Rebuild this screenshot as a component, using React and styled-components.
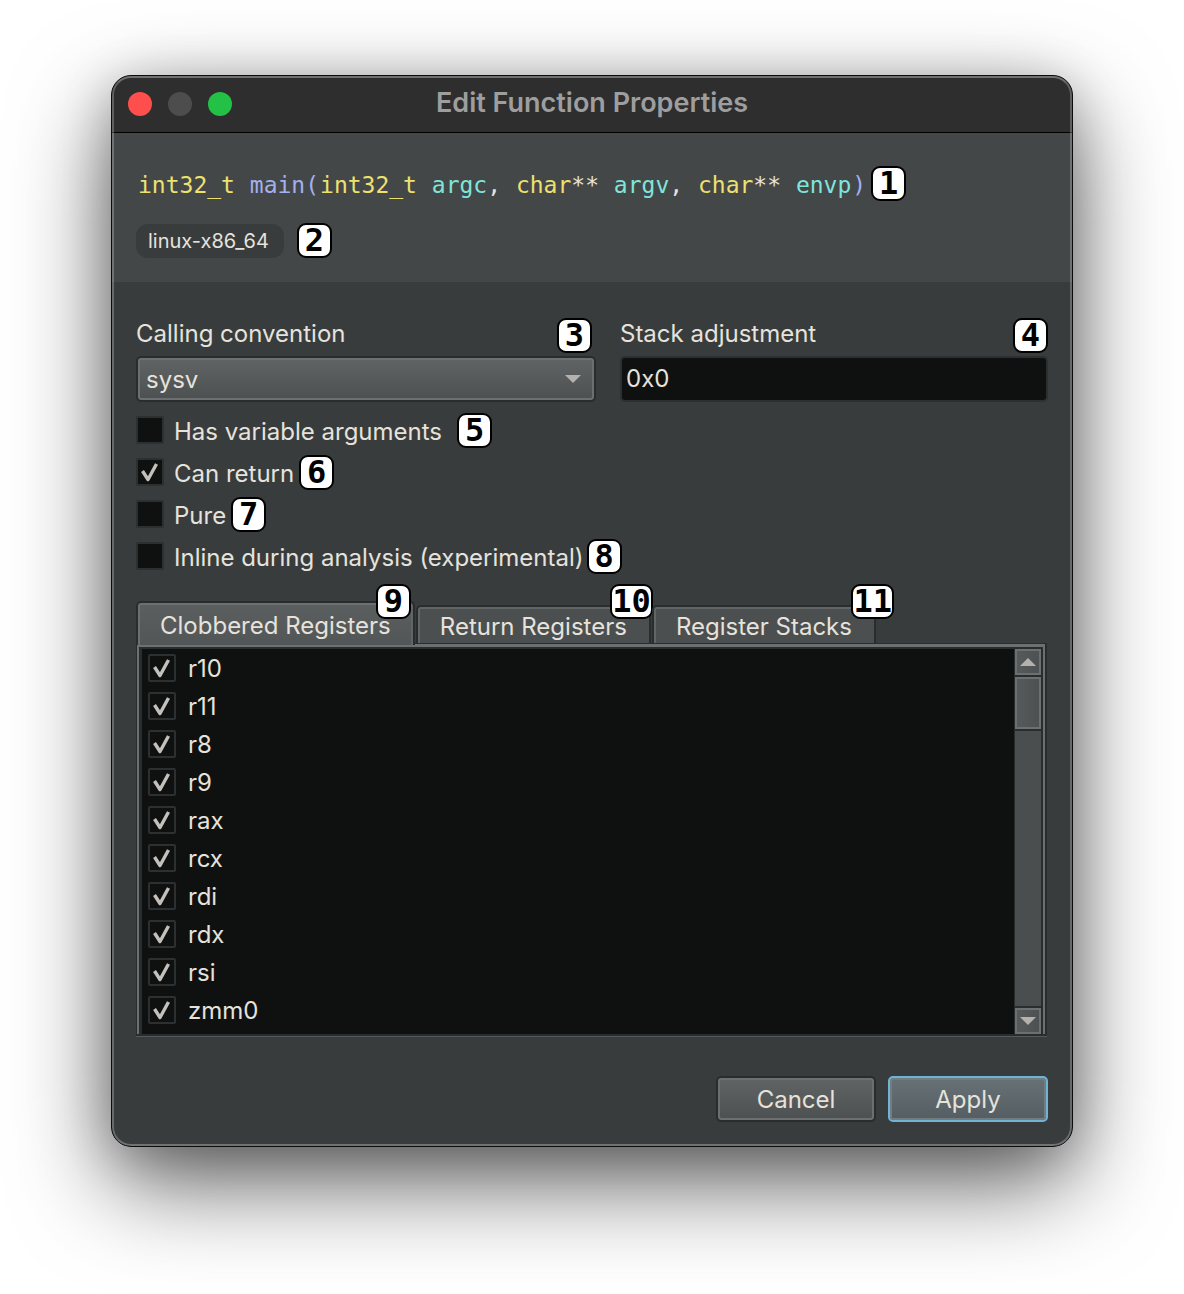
import React, { useState } from "react";
import styled, { createGlobalStyle, css } from "styled-components";

const ui = `Inter, "Liberation Sans", sans-serif`;
const mono = `"DejaVu Sans Mono", "Liberation Mono", monospace`;

const GlobalStyle = createGlobalStyle`
  *, *::before, *::after { box-sizing: border-box; }
  body { margin: 0; background: #fff; }
  button, input, select { font: inherit; color: inherit; margin: 0; }
`;

const Page = styled.main`
  min-height: 100vh;
  padding: 75px 111px;
  font: 400 24px/30px ${ui};
  color: #e6e2dc;
`;

const Window = styled.section`
  position: relative;
  border: 1px solid #0b0c0c;
  border-radius: 20px;
  overflow: hidden;
  background: #393c3d;

  &::after {
    content: "";
    position: absolute;
    inset: 0;
    border: 2px solid rgba(255, 255, 255, 0.24);
    border-bottom-color: rgba(255, 255, 255, 0.28);
    border-top-color: rgba(255, 255, 255, 0.32);
    border-radius: 19px;
    pointer-events: none;
  }
`;

const Shadow = styled.div`
  border-radius: 20px;
  box-shadow: 0 36px 96px rgba(0, 0, 0, 0.62), 0 8px 50px rgba(0, 0, 0, 0.2);
`;

const TitleBar = styled.header`
  display: grid;
  grid-template-columns: 1fr auto 1fr;
  align-items: center;
  height: 57px;
  padding: 0 16px;
  background: #2e2e2e;
  border-bottom: 1px solid #000;
`;

const Lights = styled.div`
  display: flex;
  gap: 16px;
`;

const Light = styled.button`
  width: 24px;
  height: 24px;
  padding: 0;
  border: 0;
  border-radius: 50%;
  background: ${(p) => p.$color};
`;

const Title = styled.h1`
  margin: 0;
  padding-bottom: 2px;
  font: 600 27px/30px ${ui};
  color: #9e9e9e;
`;

const Summary = styled.div`
  display: flex;
  flex-direction: column;
  gap: 22px;
  padding: 33px 24px 24px;
  background: #444747;
`;

const Line = styled.div`
  display: flex;
  align-items: center;
  gap: ${(p) => p.$gap}px;
`;

const Signature = styled.code`
  padding: 3px 0 0 1px;
  font: 400 23px/30px ${mono};
  white-space: pre;
`;

const tones = { type: "#ede16f", name: "#a2b0f0", arg: "#7fe5dc", plain: "#e6e2dc" };

const Token = styled.span`
  margin-left: ${(p) => (p.$tone === "plain" ? 0 : 1)}px;
  color: ${(p) => tones[p.$tone]};
`;

const Platform = styled.span`
  padding: 2px 15px 2px 12px;
  border-radius: 12px;
  background: #393c3d;
  font-size: 20px;
`;

const badgeOverlay = css`
  position: absolute;
  top: ${(p) => p.$top}px;
  right: ${(p) => p.$right}px;
  z-index: 1;
`;

const Badge = styled.span`
  flex: none;
  display: grid;
  place-items: center;
  min-width: 35px;
  height: 35px;
  border: 2px solid #000;
  border-radius: 9px;
  background: #fff;
  color: #000;
  font: 700 32px/31px ${mono};
  ${(p) => p.$over && badgeOverlay}
`;

const Content = styled.form`
  padding: 36px 24px 24px;
`;

const Fields = styled.div`
  display: grid;
  grid-template-columns: 460fr 428fr;
  gap: 24px;
`;

const FieldHead = styled.div`
  display: flex;
  justify-content: space-between;
  align-items: center;
  height: 35px;
  margin-bottom: 3px;
  padding-right: ${(p) => p.$inset}px;
`;

const Label = styled.label`
  padding-bottom: 4px;
`;

const raised = css`
  height: 46px;
  border: 2px solid #2a2d2e;
  border-radius: 5px;
  background: linear-gradient(#606464, #4d5050);
  box-shadow: inset 0 0 0 2px #6c7070;
`;

const SelectWrap = styled.div`
  display: grid;
  align-items: center;

  > * { grid-area: 1 / 1; }
  > svg {
    justify-self: end;
    margin-right: 15px;
    pointer-events: none;
  }
`;

const Select = styled.select`
  ${raised}
  appearance: none;
  width: 100%;
  padding: 2px 8px 0;
`;

const TextInput = styled.input`
  width: 100%;
  height: 46px;
  padding: 0 4px 2px;
  border: 2px solid #2d3031;
  border-radius: 5px;
  background: #0f1110;
`;

const Options = styled.div`
  display: flex;
  flex-direction: column;
  margin-top: 7px;
`;

const Option = styled.div`
  display: flex;
  align-items: center;
  gap: ${(p) => p.$gap}px;
  height: 42px;
`;

const CheckLabel = styled.label`
  display: flex;
  align-items: center;
  gap: ${(p) => p.$gap}px;
`;

const CheckText = styled.span`
  padding-top: ${(p) => p.$drop}px;
`;

const CheckCell = styled.span`
  display: grid;
  width: 28px;
  height: 28px;

  > * { grid-area: 1 / 1; }
  > svg { pointer-events: none; visibility: hidden; }
  > input:checked + svg { visibility: visible; }
`;

const CheckInput = styled.input`
  appearance: none;
  width: 28px;
  height: 28px;
  border: 2px solid #2d3031;
  border-radius: 2px;
  background: #0f1110;
`;

const Tabs = styled.div`
  position: relative;
  display: flex;
  align-items: flex-end;
  gap: 1px;
  margin: 24px 0 -2px;
`;

const Tab = styled.button`
  position: relative;
  height: ${(p) => (p.$active ? 44 : 38)}px;
  margin-bottom: ${(p) => (p.$active ? 0 : 2)}px;
  padding: 4px 22px 0;
  border: 2px solid #2a2d2e;
  border-bottom: 0;
  border-radius: 5px 5px 0 0;
  background: ${(p) => (p.$active ? "linear-gradient(#5b5f60, #525657)" : "#4b4f50")};
  box-shadow: ${(p) =>
    p.$active
      ? "inset 2px 0 #6c7070, inset -2px 0 #616566, inset 0 2px #6c7070"
      : "inset 2px 0 #616566, inset 0 2px #616566"};
  line-height: 30px;
  z-index: ${(p) => (p.$active ? 1 : 0)};
`;

const Panel = styled.div`
  margin-right: 1px;
  border: solid #2a2d2e;
  border-width: 1px 2px 2px 1px;
  box-shadow: 0 1px #56595a;
  background: #2a2d2e;
`;

const PanelFrame = styled.div`
  display: flex;
  padding: 2px 2px 0 3px;
  border: solid #6c7070;
  border-width: 3px 2px 0 2px;
`;

const RegisterList = styled.ul`
  flex: 1;
  margin: 0;
  padding: 0 6px 5px;
  list-style: none;
  background: #0f1110;
`;

const Register = styled.li`
  display: flex;
  align-items: center;
  height: 38px;
`;

const ScrollBar = styled.div`
  display: flex;
  flex-direction: column;
  gap: 2px;
  width: 27px;
  padding-left: 1px;
`;

const scrollPiece = css`
  border: 2px solid #6c7070;
  background: linear-gradient(90deg, #565a5b, #4d5152);
`;

const ScrollButton = styled.button`
  ${scrollPiece}
  display: grid;
  place-items: center;
  height: 26px;
  padding: 0;
`;

const ScrollThumb = styled.div`
  ${scrollPiece}
  height: 52px;
`;

const ScrollTrack = styled.div`
  flex: 1;
  background: #4a4e4f;
`;

const Actions = styled.div`
  display: flex;
  justify-content: flex-end;
  gap: 12px;
  margin-top: 40px;
`;

const Action = styled.button`
  ${raised}
  width: 160px;
  padding: 1px 0 0;
  ${(p) =>
    p.$primary &&
    css`
      border-color: #6fb4d2;
      background: linear-gradient(#677277, #535d62);
      box-shadow: inset 0 0 0 2px #737c80;
    `}
`;

const Triangle = ({ up }) => (
  <svg width="16" height="8" viewBox="0 0 16 8" aria-hidden="true">
    <path d={up ? "M0 8L8 0L16 8Z" : "M0 0H16L8 8Z"} fill="#b4b2ae" />
  </svg>
);

function Checkbox({ label, defaultChecked, gap = 10, drop = 4 }) {
  return (
    <CheckLabel $gap={gap}>
      <CheckCell>
        <CheckInput type="checkbox" defaultChecked={defaultChecked} />
        <svg viewBox="0 0 28 28" aria-hidden="true">
          <path d="M6.5 13L12 21.5L20.5 6" fill="none" stroke="#c4c0bc" strokeWidth="3.4" strokeLinejoin="round" />
        </svg>
      </CheckCell>
      <CheckText $drop={drop}>{label}</CheckText>
    </CheckLabel>
  );
}

const signature = [
  ["type", "int32_t "],
  ["name", "main("],
  ["type", "int32_t "],
  ["arg", "argc"],
  ["plain", ", "],
  ["type", "char"],
  ["plain", "** "],
  ["arg", "argv"],
  ["plain", ", "],
  ["type", "char"],
  ["plain", "** "],
  ["arg", "envp"],
  ["name", ")"],
];

const options = [
  { label: "Has variable arguments", badge: 5, gap: 15 },
  { label: "Can return", badge: 6, gap: 5, checked: true },
  { label: "Pure", badge: 7, gap: 5 },
  { label: "Inline during analysis (experimental)", badge: 8, gap: 3 },
];

const tabs = [
  { label: "Clobbered Registers", badge: 9, right: 2 },
  { label: "Return Registers", badge: 10, right: -4 },
  { label: "Register Stacks", badge: 11, right: -20 },
];

const registers = ["r10", "r11", "r8", "r9", "rax", "rcx", "rdi", "rdx", "rsi", "zmm0"];

export default function App() {
  const [active, setActive] = useState(0);
  return (
    <Page>
      <GlobalStyle />
      <Shadow>
        <Window>
          <TitleBar>
            <Lights>
              <Light type="button" aria-label="Close" $color="#ff4f4c" />
              <Light type="button" aria-label="Minimize" $color="#4d4d4d" />
              <Light type="button" aria-label="Zoom" $color="#23c146" />
            </Lights>
            <Title>Edit Function Properties</Title>
          </TitleBar>
          <Summary>
            <Line $gap={5}>
              <Signature>
                {signature.map(([tone, text], i) => (
                  <Token key={i} $tone={tone}>{text}</Token>
                ))}
              </Signature>
              <Badge>1</Badge>
            </Line>
            <Line $gap={13}>
              <Platform>linux-x86_64</Platform>
              <Badge>2</Badge>
            </Line>
          </Summary>
          <Content onSubmit={(e) => e.preventDefault()}>
            <Fields>
              <div>
                <FieldHead $inset={4}>
                  <Label htmlFor="convention">Calling convention</Label>
                  <Badge>3</Badge>
                </FieldHead>
                <SelectWrap>
                  <Select id="convention" defaultValue="sysv">
                    <option>sysv</option>
                  </Select>
                  <Triangle />
                </SelectWrap>
              </div>
              <div>
                <FieldHead $inset={0}>
                  <Label htmlFor="stack">Stack adjustment</Label>
                  <Badge>4</Badge>
                </FieldHead>
                <TextInput id="stack" defaultValue="0x0" />
              </div>
            </Fields>
            <Options>
              {options.map((o) => (
                <Option key={o.label} $gap={o.gap}>
                  <Checkbox label={o.label} defaultChecked={o.checked} />
                  <Badge>{o.badge}</Badge>
                </Option>
              ))}
            </Options>
            <Tabs role="tablist">
              {tabs.map((t, i) => (
                <Tab
                  key={t.label}
                  type="button"
                  role="tab"
                  aria-selected={active === i}
                  $active={active === i}
                  onClick={() => setActive(i)}
                >
                  {t.label}
                  <Badge $over $top={active === i ? -19 : -23} $right={t.right}>{t.badge}</Badge>
                </Tab>
              ))}
            </Tabs>
            <Panel>
              <PanelFrame>
                <RegisterList>
                  {registers.map((r) => (
                    <Register key={r}>
                      <Checkbox label={r} defaultChecked gap={12} drop={2} />
                    </Register>
                  ))}
                </RegisterList>
                <ScrollBar>
                  <ScrollButton type="button" aria-label="Scroll up"><Triangle up /></ScrollButton>
                  <ScrollThumb />
                  <ScrollTrack />
                  <ScrollButton type="button" aria-label="Scroll down"><Triangle /></ScrollButton>
                </ScrollBar>
              </PanelFrame>
            </Panel>
            <Actions>
              <Action type="button">Cancel</Action>
              <Action type="submit" $primary>Apply</Action>
            </Actions>
          </Content>
        </Window>
      </Shadow>
    </Page>
  );
}
